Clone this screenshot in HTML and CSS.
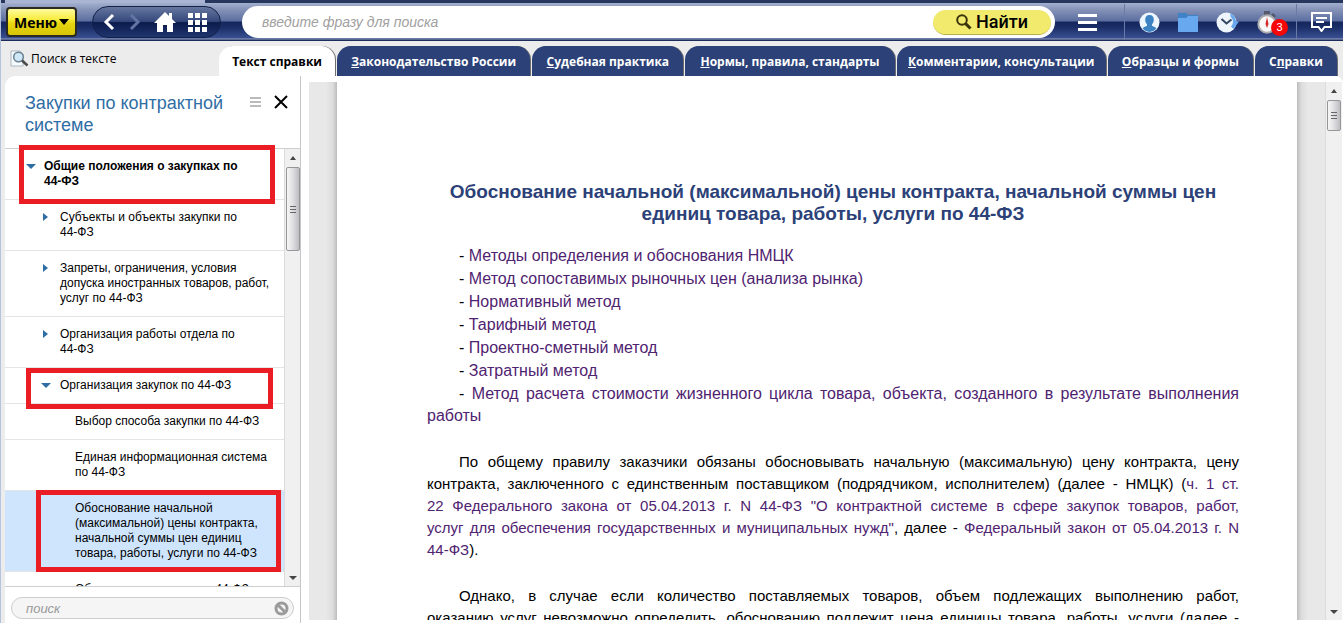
FILE: index.html
```html
<!DOCTYPE html>
<html lang="ru">
<head>
<meta charset="utf-8">
<title>Закупки по контрактной системе</title>
<link rel="stylesheet" href="styles.css">
</head>
<body>
<header class="topbar">
  <button class="menu-btn">Меню<svg width="10" height="6" viewBox="0 0 10 6"><path d="M0 0h10L5 6z"/></svg></button>
  <nav class="nav-pill">
    <button class="icon-btn" aria-label="Назад"><svg width="14" height="18" viewBox="0 0 14 18"><path d="M11 2L4 9l7 7" fill="none" stroke="#fff" stroke-width="3"/></svg></button>
    <button class="icon-btn" aria-label="Вперёд"><svg width="14" height="18" viewBox="0 0 14 18"><path d="M3 2l7 7-7 7" fill="none" stroke="#6374a3" stroke-width="3"/></svg></button>
    <button class="icon-btn home" aria-label="Домой"><svg width="22" height="20" viewBox="0 0 22 20"><path d="M11 0l4 4V1h3v6l4 4h-3v9h-6v-7H9v7H3v-9H0z" fill="#fff"/></svg></button>
    <button class="icon-btn grid" aria-label="Разделы"><svg width="19" height="19" viewBox="0 0 19 19" fill="#fff"><path d="M0 0h5v5H0zM7 0h5v5H7zM14 0h5v5h-5zM0 7h5v5H0zM7 7h5v5H7zM14 7h5v5h-5zM0 14h5v5H0zM7 14h5v5H7zM14 14h5v5h-5z"/></svg></button>
  </nav>
  <form class="search">
    <input type="text" class="search-input" aria-label="Поиск" placeholder="введите фразу для поиска">
    <button type="button" class="find-btn"><svg width="16" height="16" viewBox="0 0 16 16" fill="none" stroke="#3a330c"><circle cx="6" cy="6" r="4.800" stroke-width="2"/><path d="M9.600 9.600L14.500 14.500" stroke-width="3"/></svg>Найти</button>
  </form>
  <div class="tools">
    <button class="icon-btn burger" aria-label="Список"><svg width="19" height="17" viewBox="0 0 19 17" fill="#fff"><path d="M0 0h19v3H0zM0 7h19v3H0zM0 14h19v3H0z"/></svg></button>
    <div class="tool-group">
      <button class="icon-btn" aria-label="Профиль"><svg width="21" height="21" viewBox="0 0 21 21"><circle cx="10.500" cy="10.500" r="10" fill="#edf5fd"/><path d="M10.500 3c3 0 4.500 2 4.300 5-.1 2-.9 3.400-1.800 4.300v1.500c1 .9 3.300 1.200 4.500 2.500A9.800 9.800 0 0 1 10.500 20a9.800 9.800 0 0 1-7-3.700c1.200-1.300 3.500-1.600 4.500-2.500v-1.500C7.100 11.400 6.300 10 6.200 8 6 5 7.500 3 10.500 3z" fill="#3d83c4"/></svg></button>
      <button class="icon-btn" aria-label="Папки"><svg width="20" height="19" viewBox="0 0 20 19"><path d="M0 0h8l2 2h10v6H0z" fill="#3f83c6"/><path d="M0 5h8l2-2h10v16H0z" fill="#68a8ef"/></svg></button>
      <button class="icon-btn" aria-label="История"><svg width="23" height="21" viewBox="0 0 23 21"><circle cx="10.500" cy="10.500" r="10" fill="#eef5fd"/><path d="M14 1.200a10 10 0 0 1 6 8.300h3L17.500 17 12 11.500l3.500-1.500z" fill="#68a8ef"/><circle cx="10.500" cy="10" r="6.500" fill="#eef5fd"/><path d="M5.500 7l5 4.500 5-4" fill="none" stroke="#34465f" stroke-width="2"/></svg></button>
      <button class="icon-btn timer" aria-label="Таймер"><svg width="21" height="24" viewBox="0 0 21 24"><path d="M7 1h6v4H7z" fill="#53586c"/><path d="M16 3l3 3-2 2-3-3z" fill="#53586c"/><circle cx="10" cy="14" r="8.700" fill="#f8f8f8" stroke="#aaa9ad" stroke-width="2"/><path d="M10 7l1.500 7-1.500 4-1.500-4z" fill="#d5292c"/></svg><span class="badge">3</span></button>
    </div>
    <button class="icon-btn chat" aria-label="Сообщения"><svg width="21" height="20" viewBox="0 0 21 20" fill="none" stroke="#fff" stroke-width="2"><path d="M1 1h19v14h-6.500l-3 4-3-4H1z"/><path d="M5 6h11M5 10h8"/></svg></button>
  </div>
</header>

<div class="tabrow">
  <button class="find-text"><svg width="19" height="17" viewBox="0 0 19 17"><path d="M1 1h9l3 3v12H1z" fill="#f6fbff" stroke="#aab6c0"/><circle cx="8.500" cy="7" r="4.800" fill="#cfe8f7" stroke="#6b8190" stroke-width="1.500"/><path d="M12 10.500l5.500 5" stroke="#494a4c" stroke-width="2.500"/></svg>Поиск в тексте</button>
  <nav class="tabs">
    <a href="#" class="tab t1 active">Текст справки</a>
    <a href="#" class="tab t2"><u>З</u>аконодательство России</a>
    <a href="#" class="tab t3"><u>С</u>удебная практика</a>
    <a href="#" class="tab t4"><u>Н</u>ормы, правила, стандарты</a>
    <a href="#" class="tab t4"><u>К</u>омментарии, консультации</a>
    <a href="#" class="tab t5"><u>О</u>бразцы и формы</a>
    <a href="#" class="tab t6">С<u>п</u>равки</a>
  </nav>
</div>

<div class="body">
  <aside class="sidebar">
    <div class="side-head">
      <h2 class="side-title">Закупки по контрактной системе</h2>
      <button class="icon-btn" aria-label="Вид"><svg width="11" height="10" viewBox="0 0 11 10" fill="#bababa"><path d="M0 0h11v2H0zM0 4h11v2H0zM0 8h11v2H0z"/></svg></button>
      <button class="icon-btn" aria-label="Закрыть"><svg width="14" height="14" viewBox="0 0 14 14"><path d="M1 1l12 12M13 1L1 13" stroke="#000" stroke-width="2"/></svg></button>
    </div>
    <div class="side-list">
      <ul class="tree">
        <li class="node root"><i class="arrow open"></i>Общие положения о закупках по<br>44-ФЗ</li>
        <li class="node child"><i class="arrow"></i>Субъекты и объекты закупки по<br>44-ФЗ</li>
        <li class="node child"><i class="arrow"></i>Запреты, ограничения, условия<br>допуска иностранных товаров, работ,<br>услуг по 44-ФЗ</li>
        <li class="node child"><i class="arrow"></i>Организация работы отдела по<br>44-ФЗ</li>
        <li class="node child"><i class="arrow open"></i>Организация закупок по 44-ФЗ</li>
        <li class="node leaf">Выбор способа закупки по 44-ФЗ</li>
        <li class="node leaf">Единая информационная система<br>по 44-ФЗ</li>
        <li class="node leaf selected">Обоснование начальной<br>(максимальной) цены контракта,<br>начальной суммы цен единиц<br>товара, работы, услуги по 44-ФЗ</li>
        <li class="node leaf">Обоснование закупок по 44-ФЗ</li>
      </ul>
      <div class="scroll"><i class="up"></i><div class="thumb t-side"></div><i class="down"></i></div>
    </div>
    <div class="side-foot">
      <div class="side-search">
        <input type="text" aria-label="Поиск по списку" placeholder="поиск">
        <button class="icon-btn" aria-label="Очистить"><svg width="15" height="15" viewBox="0 0 15 15" fill="none" stroke="#9b9b9b" stroke-width="3"><circle cx="7.500" cy="7.500" r="5.500"/><path d="M3.500 3.500l8 8"/></svg></button>
      </div>
    </div>
    <div class="mark m1"></div>
    <div class="mark m2"></div>
    <div class="mark m3"></div>
  </aside>

  <main class="viewer">
    <div class="edge left"></div>
    <article class="doc">
      <h1>Обоснование начальной (максимальной) цены контракта, начальной суммы цен<br>единиц товара, работы, услуги по 44-ФЗ</h1>
      <ul class="links">
        <li>- <a href="#">Методы определения и обоснования НМЦК</a></li>
        <li>- <a href="#">Метод сопоставимых рыночных цен (анализа рынка)</a></li>
        <li>- <a href="#">Нормативный метод</a></li>
        <li>- <a href="#">Тарифный метод</a></li>
        <li>- <a href="#">Проектно-сметный метод</a></li>
        <li>- <a href="#">Затратный метод</a></li>
        <li>- <a href="#">Метод расчета стоимости жизненного цикла товара, объекта, созданного в результате выполнения работы</a></li>
      </ul>
      <p>По общему правилу заказчики обязаны обосновывать начальную (максимальную) цену контракта, цену<br>контракта, заключенного с единственным поставщиком (подрядчиком, исполнителем) (далее - НМЦК) (<a href="#">ч. 1 ст.<br>22 Федерального закона от 05.04.2013 г. N 44-ФЗ "О контрактной системе в сфере закупок товаров, работ,<br>услуг для обеспечения государственных и муниципальных нужд"</a>, далее - <a href="#">Федеральный закон от 05.04.2013 г. N</a><span class="last"><a href="#">44-ФЗ</a>).</span></p>
      <p>Однако, в случае если количество поставляемых товаров, объем подлежащих выполнению работ,<br>оказанию услуг невозможно определить, обоснованию подлежит цена единицы товара, работы, услуги (далее -</p>
    </article>
    <div class="edge right"></div>
    <div class="scroll main-scroll"><i class="up"></i><div class="thumb t-main"></div><i class="down"></i></div>
  </main>
</div>
</body>
</html>
```
FILE: styles.css
```css
* { box-sizing: border-box; }
body {
  margin: 0;
  height: 100vh;
  display: flex;
  flex-direction: column;
  overflow: hidden;
  background: #ececec;
  border-left: 1px solid #b5c4dc;
  font-family: "Liberation Sans", Arial, sans-serif;
  color: #000;
}
button { font: inherit; border: 0; background: none; padding: 0; cursor: pointer; }
svg { display: block; flex: none; }
.icon-btn { display: flex; flex: none; }

.topbar {
  flex: none;
  height: 41px;
  display: flex;
  align-items: center;
  padding: 3px 0 0 5px;
  background:
    linear-gradient(#a9b5d2, #a9b5d2) 4px 0 / 200px 3px no-repeat,
    linear-gradient(#26365c 3px, #a3afce 3px, #8391b7 10px, #5c6ea0 21px, #14265c 22px, #1a2d66 27px, #384f90 38px, #9aa5c4 39px, #1d2c5c 40px);
}
.menu-btn {
  display: flex;
  align-items: center;
  justify-content: center;
  gap: 2px;
  flex: none;
  width: 71px;
  height: 30px;
  border: 2px solid #2a2a25;
  border-radius: 4px;
  background: linear-gradient(#fffb9e, #f7ec3e 40%, #e6d510 55%, #d8c608);
  font: bold 14px "Open Sans", "Noto Sans", sans-serif;
}
.nav-pill {
  display: flex;
  align-items: center;
  flex: none;
  width: 129px;
  height: 32px;
  margin-left: 15px;
  padding-left: 9px;
  gap: 12px;
  border: 1px solid #142147;
  border-radius: 16px;
  background: linear-gradient(#66779f, #35487c 48%, #0b1b4c 52%, #20356f);
}
.search {
  display: flex;
  align-items: center;
  flex: 1;
  height: 32px;
  margin: 0 0 0 21px;
  padding: 0 4px 0 20px;
  border-radius: 16px;
  background: #fff;
}
.search-input {
  flex: 1;
  min-width: 0;
  border: 0;
  padding: 0;
  outline: 0;
  background: none;
  font: italic 14px "Liberation Sans", Arial, sans-serif;
}
.search-input::placeholder { color: #a0a0a0; opacity: 1; }
.find-btn {
  display: flex;
  align-items: center;
  justify-content: center;
  gap: 4px;
  width: 118px;
  height: 25px;
  border-radius: 13px;
  border-bottom: 1px solid #b9b24c;
  background: #f1ea6c;
  font: 500 18px Roboto, sans-serif;
}
.tools { display: flex; align-items: center; flex: none; height: 100%; }
.burger { margin: 0 27px 0 23px; }
.tool-group {
  display: flex;
  align-items: center;
  height: 36px;
  gap: 18px;
  padding: 0 18px 0 14px;
  border-left: 1px solid #6a7aa6;
  border-right: 1px solid #6a7aa6;
}
.timer { position: relative; }
.badge {
  position: absolute;
  left: 14px;
  top: 9px;
  width: 17px;
  height: 17px;
  border-radius: 50%;
  background: #f60606;
  color: #fff;
  font-size: 11px;
  line-height: 17px;
  text-align: center;
}
.chat { margin: 0 11px 0 14px; }

.tabrow { flex: none; display: flex; height: 35px; }
.find-text {
  display: flex;
  align-items: center;
  gap: 2px;
  flex: none;
  width: 218px;
  padding-left: 9px;
  font: 12px "Open Sans", "Noto Sans", sans-serif;
}
.tabs { display: flex; flex: 1; gap: 2px; padding: 5px 6px 0 0; }
.tab {
  min-width: 0;
  border-radius: 14px 14px 0 0;
  background: #2b4177;
  box-shadow: 1px 0 0 #6b6b70;
  color: #fff;
  font: bold 12px/32px "Open Sans", "Noto Sans", sans-serif;
  text-align: center;
  text-decoration: none;
  white-space: nowrap;
}
.active { background: #fff; color: #000; }
.t1 { flex: 116 1 0; }
.t2 { flex: 193 1 0; }
.t3 { flex: 151 1 0; }
.t4 { flex: 209 1 0; }
.t5 { flex: 145 1 0; }
.t6 { flex: 82 1 0; }

.body { flex: 1; display: flex; min-height: 0; padding-left: 4px; }
.sidebar {
  position: relative;
  display: flex;
  flex-direction: column;
  flex: none;
  width: 296px;
  background: #fff;
  border-right: 1px solid #c6c6ca;
  border-radius: 10px 0 0 0;
}
.side-head {
  display: flex;
  align-items: flex-start;
  gap: 13px;
  padding: 16px 12px 12px 20px;
  border-bottom: 1px solid #cfcfcf;
}
.side-head .icon-btn { height: 20px; align-items: center; }
.side-title {
  flex: 1;
  margin: 0;
  color: #2f6da5;
  font: 500 18px/22px "Liberation Sans", Arial, sans-serif;
}
.side-list { flex: 1; display: flex; min-height: 0; }
.tree { flex: 1; margin: 0; padding: 0; list-style: none; overflow: hidden; }
.node {
  position: relative;
  padding-top: 10px;
  padding-bottom: 10px;
  border-bottom: 1px solid #e4e4e4;
  font-size: 12px;
  line-height: 15px;
  white-space: nowrap;
}
.root { padding-left: 39px; font-weight: bold; }
.child { padding-left: 55px; }
.leaf { padding-left: 70px; }
.selected { background: #cfe5fe; }
.arrow {
  position: absolute;
  left: 38px;
  top: 13px;
  border: 4px solid transparent;
  border-left: 5px solid #2f6da5;
  border-right: 0;
}
.arrow.open {
  left: 36px;
  top: 15px;
  border: 5px solid transparent;
  border-top: 5px solid #2f6da5;
  border-bottom: 0;
}
.root .arrow.open { left: 21px; }

.scroll {
  flex: none;
  display: flex;
  flex-direction: column;
  align-items: center;
  width: 16px;
  border-left: 1px solid #dcdcdc;
  background: #f0f0f0;
}
.up { margin: 7px 0; border: 3px solid transparent; border-top: 0; border-bottom: 4px solid #444; }
.down { margin: auto 0 6px; border: 4px solid transparent; border-bottom: 0; border-top: 4px solid #444; }
.thumb {
  width: 14px;
  border: 1px solid #96969a;
  border-radius: 2px;
  background:
    repeating-linear-gradient(#66666a 0 1px, transparent 1px 3px) center / 6px 7px no-repeat,
    linear-gradient(90deg, #f7f7f7, #dedee0 50%, #bdbdc1);
}
.t-side { height: 84px; }
.side-foot { flex: none; padding: 10px 6px 4px; border-top: 1px solid #cfcfcf; }
.side-search {
  display: flex;
  align-items: center;
  height: 22px;
  padding: 0 4px 0 14px;
  border: 1px solid #cdcdcd;
  border-radius: 11px;
  background: #f5f5f5;
}
.side-search input {
  flex: 1;
  min-width: 0;
  border: 0;
  padding: 0;
  background: none;
  font: italic 13px "Liberation Sans", Arial, sans-serif;
}
.side-search input::placeholder { color: #999; opacity: 1; }
.mark { position: absolute; border: 5px solid #ea1c24; pointer-events: none; }
.m1 { left: 14px; top: 69px; width: 256px; height: 59px; }
.m2 { left: 21px; top: 292px; width: 247px; height: 41px; }
.m3 { left: 31px; top: 414px; width: 245px; height: 82px; }

.viewer { flex: 1; display: flex; min-width: 0; padding: 6px 1px 3px 8px; background: #fff; border-radius: 0 8px 0 0; }
.edge { flex: none; width: 28px; }
.left { background: linear-gradient(90deg, #e8e8e8 60%, #dcdcdc 85%, #bcbcbc); }
.right { background: linear-gradient(270deg, #e8e8e8 60%, #dcdcdc 85%, #bcbcbc); }
.doc {
  flex: 1;
  min-width: 0;
  overflow: hidden;
  padding: 99px 58px 0 90px;
  background: #fff;
  font-size: 16px;
  line-height: 22px;
}
.doc h1 {
  margin: 0 0 20px;
  color: #2b4177;
  font-size: 19px;
  line-height: 22px;
  text-align: center;
}
.doc a { color: #4f2370; text-decoration: none; }
.links { margin: 0; padding: 0; list-style: none; text-align: justify; }
.links li { margin-top: 1px; text-indent: 32px; }
.doc p {
  margin: 24px 0 23px;
  font-size: 15px;
  text-indent: 32px;
  text-align: justify;
  text-align-last: justify;
}
.last { display: block; text-indent: 0; text-align-last: left; }
.main-scroll { width: 17px; }
.t-main { height: 31px; }
```
